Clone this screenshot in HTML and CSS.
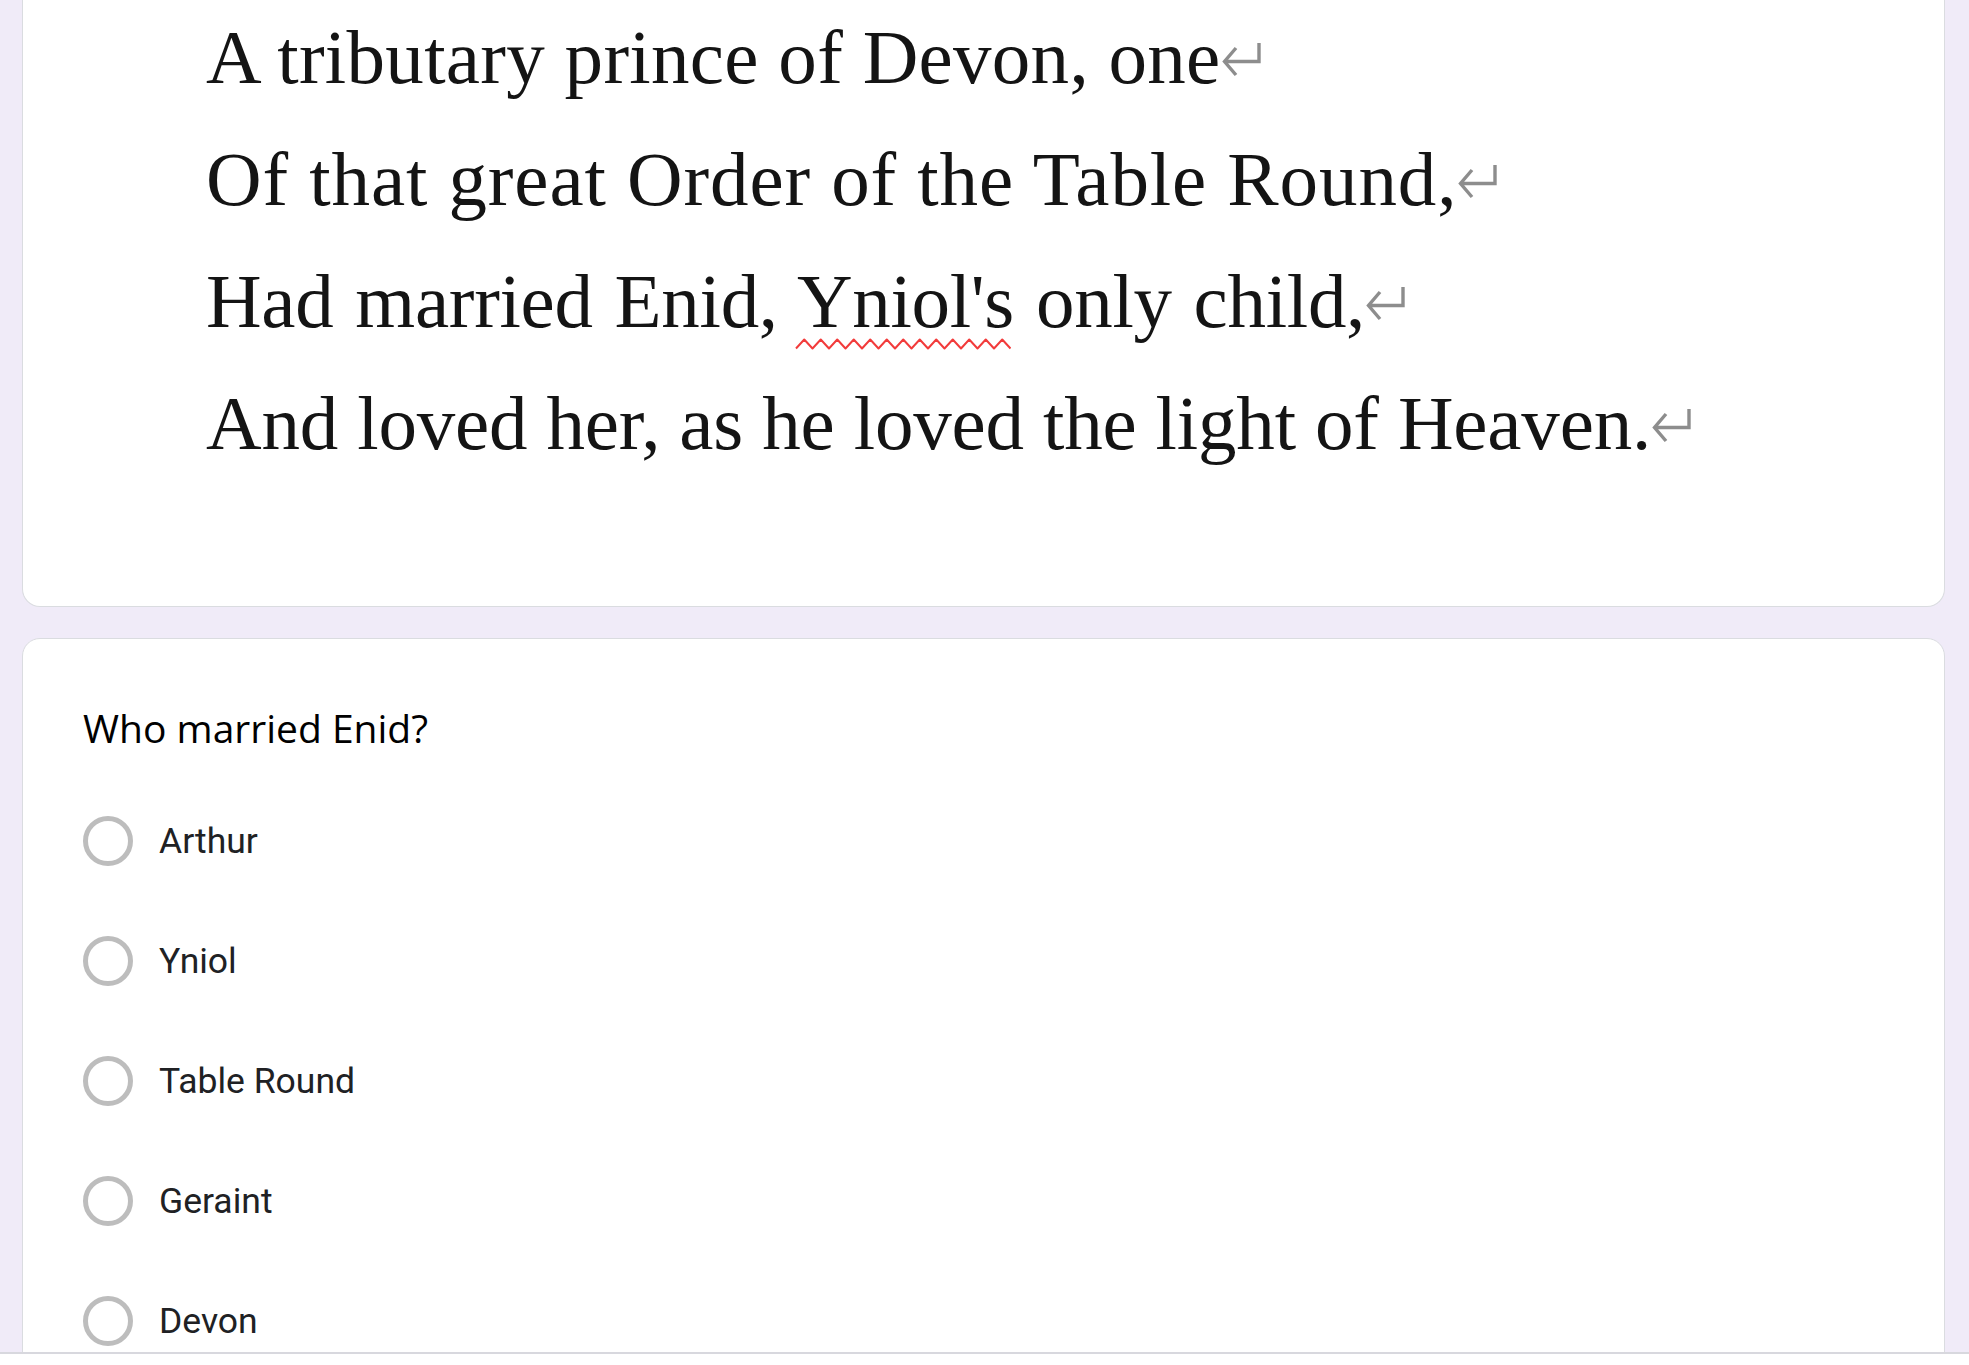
FILE: index.html
```html
<!DOCTYPE html>
<html lang="en">
<head>
<meta charset="utf-8">
<title>Who married Enid?</title>
<link rel="stylesheet" href="styles.css">
</head>
<body>
<div class="screen">
  <section class="card card--cut">
    <div class="poem">
      <p class="line line--1">A tributary prince of Devon, one<svg class="ret" viewBox="0 0 40 34" width="40" height="34"><path d="M37 0 V18.5 H3 M14 5 L2.5 18.5 L14 32"/></svg></p>
      <p class="line line--2">Of that great Order of the Table Round,<svg class="ret" viewBox="0 0 40 34" width="40" height="34"><path d="M37 0 V18.5 H3 M14 5 L2.5 18.5 L14 32"/></svg></p>
      <p class="line line--3">Had married Enid, <span class="misspelt">Yniol's<svg class="squiggle" viewBox="0 0 216 12" width="216" height="12"><path d="M1 10.5 l8.25 -9 l8.25 9 l8.25 -9 l8.25 9 l8.25 -9 l8.25 9 l8.25 -9 l8.25 9 l8.25 -9 l8.25 9 l8.25 -9 l8.25 9 l8.25 -9 l8.25 9 l8.25 -9 l8.25 9 l8.25 -9 l8.25 9 l8.25 -9 l8.25 9 l8.25 -9 l8.25 9 l8.25 -9 l8.25 9 l8.25 -9 l8.25 9"/></svg></span> only child,<svg class="ret" viewBox="0 0 40 34" width="40" height="34"><path d="M37 0 V18.5 H3 M14 5 L2.5 18.5 L14 32"/></svg></p>
      <p class="line line--4">And loved her, as he loved the light of Heaven.<svg class="ret" viewBox="0 0 40 34" width="40" height="34"><path d="M37 0 V18.5 H3 M14 5 L2.5 18.5 L14 32"/></svg></p>
    </div>
  </section>

  <section class="card question">
    <h2 class="question__title">Who married Enid?</h2>
    <ul class="options">
      <li class="option"><span class="radio"></span><span class="option__label">Arthur</span></li>
      <li class="option"><span class="radio"></span><span class="option__label">Yniol</span></li>
      <li class="option"><span class="radio"></span><span class="option__label">Table Round</span></li>
      <li class="option"><span class="radio"></span><span class="option__label">Geraint</span></li>
      <li class="option"><span class="radio"></span><span class="option__label">Devon</span></li>
    </ul>
  </section>
</div>
<div class="frame-edge"></div>
</body>
</html>
```

FILE: styles.css
```css
* {
  box-sizing: border-box;
}

html, body {
  margin: 0;
  padding: 0;
}

body {
  background: #f0ebf8;
  overflow: hidden;
  font-family: Roboto, "Liberation Sans", Arial, sans-serif;
}

.screen {
  height: 1352px;
  overflow: hidden;
  padding: 0 24px 0 22px;
  display: flex;
  flex-direction: column;
  gap: 31px;
}

.card {
  flex: none;
  background: #ffffff;
  border: 1px solid #dadce0;
  border-radius: 18px;
}

.card--cut {
  border-top: 0;
  border-top-left-radius: 0;
  border-top-right-radius: 0;
  padding: 0 0 122px 183px;
}

.poem {
  margin-top: -4px;
  font-family: "Liberation Serif", "Times New Roman", serif;
  font-size: 77px;
  line-height: 122px;
  color: #141414;
}

.line {
  margin: 0;
  white-space: nowrap;
}

.line--1 {
  letter-spacing: 0.3px;
}

.line--2 {
  letter-spacing: 0.9px;
}

.line--3 {
  word-spacing: 3px;
  letter-spacing: -0.3px;
}

.line--4 {
  letter-spacing: -0.17px;
}

.ret {
  vertical-align: 6px;
  margin-left: 1px;
  fill: none;
  stroke: #8d8d8d;
  stroke-width: 3.4;
  stroke-linejoin: miter;
}

.misspelt {
  position: relative;
}

.squiggle {
  position: absolute;
  left: -2px;
  top: 80px;
  fill: none;
  stroke: #f23b3b;
  stroke-width: 2;
  stroke-linejoin: round;
}

.question {
  padding: 65px 60px 0 60px;
}

.question__title {
  margin: 0;
  font-family: "Open Sans", "Noto Sans", sans-serif;
  font-weight: 400;
  font-size: 39px;
  line-height: 48px;
  color: #000000;
}

.options {
  list-style: none;
  margin: 29px 0 0 0;
  padding: 0;
}

.option {
  height: 120px;
  display: flex;
  align-items: center;
  gap: 26px;
}

.radio {
  flex: none;
  width: 50px;
  height: 50px;
  border: 5px solid #bdbdbd;
  border-radius: 50%;
}

.option__label {
  font-family: Roboto, "Liberation Sans", sans-serif;
  font-size: 35.5px;
  line-height: 41px;
  color: #202124;
}

.frame-edge {
  height: 13px;
  background: #ffffff;
  border-top: 2px solid #d8d8de;
}
```
